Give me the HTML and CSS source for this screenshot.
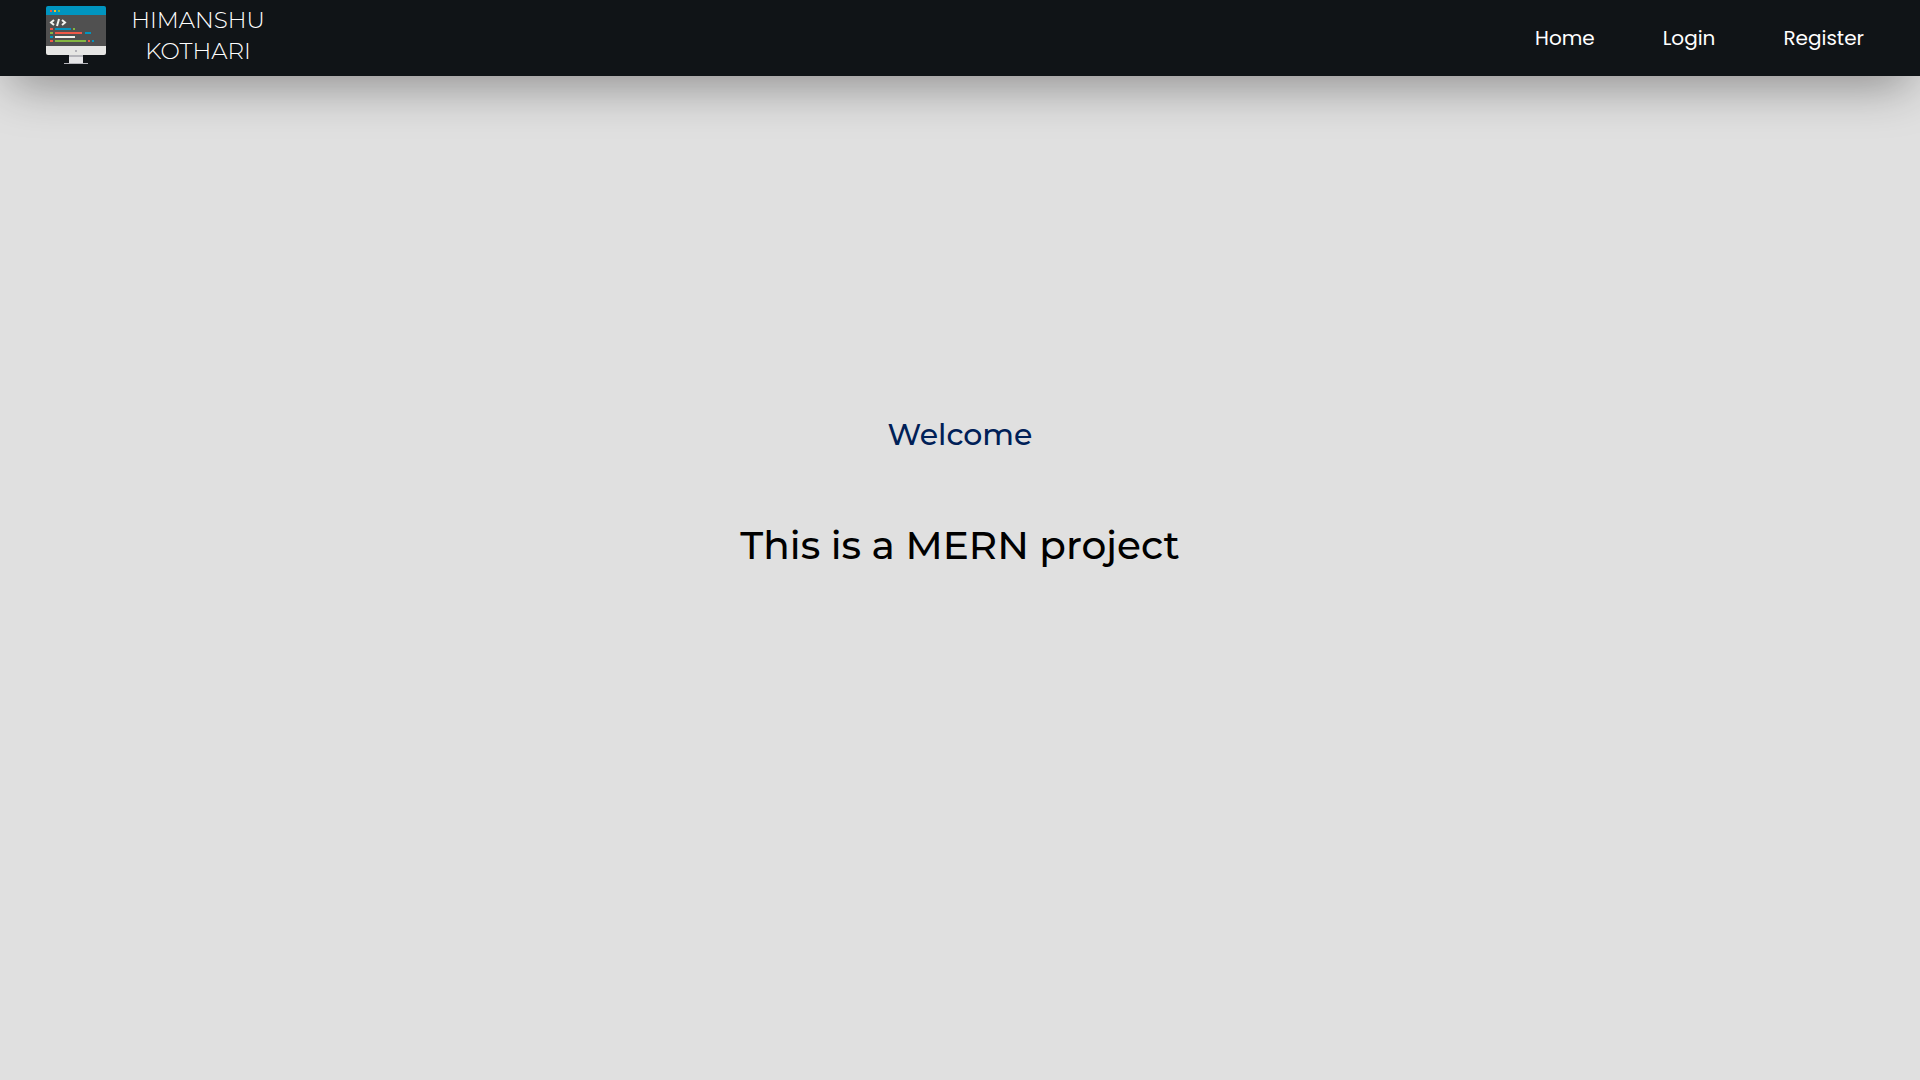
FILE: index.html
```html
<!DOCTYPE html>
<html lang="en">
<head>
  <meta charset="utf-8">
  <meta name="viewport" content="width=device-width, initial-scale=1">
  <title>Himanshu Kothari</title>
  <link rel="stylesheet" href="styles.css">
</head>
<body>
  <header class="navbar">
    <div class="brand">
      <svg class="brand-logo" viewBox="0 0 60 60" aria-hidden="true">
        <path fill="#505050" d="M0 8h60v33H0z"/>
        <path fill="#0095c0" d="M2 0h56q2 0 2 2v7H0V2q0-2 2-2z"/>
        <path fill="#e6e6e4" d="M0 40h60v7q0 2-2 2H2q-2 0-2-2z"/>
        <path fill="#e4e4e6" d="M23 49h14v8H23z"/>
        <path fill="#b4b4ba" d="M23 49h14v2H23zM18 57h24v1H18zM29 44h2v2h-2z"/>
        <path fill="#ef5848" d="M4 4h2v2H4zM4 22h3v2H4zM4 34h3v2H4zM9 26h27v2H9zM42 34h2v2h-2z"/>
        <path fill="#f3bd20" d="M8 4h2v2H8z"/>
        <path fill="#84b641" d="M12 4h2v2h-2zM27 22h2v2h-2zM4 26h3v2H4zM9 34h31v2H9z"/>
        <path fill="#0095c0" d="M9 22h16v2H9zM39 26h6v2h-6zM4 30h3v2H4zM46 34h2v2h-2z"/>
        <path fill="#f2f2ee" d="M9 30h20v2H9z"/>
        <path fill="none" stroke="#f2f2ee" stroke-width="2" d="M8 14l-3 2.500 3 2.500M13 13l-2 7M16 14l3 2.500-3 2.500"/>
      </svg>
      <span class="brand-name">HIMANSHU KOTHARI</span>
    </div>
    <nav class="nav-links">
      <a href="#home">Home</a>
      <a href="#login">Login</a>
      <a href="#register">Register</a>
    </nav>
  </header>
  <main class="hero">
    <p class="hero-greeting">Welcome</p>
    <h1 class="hero-title">This is a MERN project</h1>
  </main>
</body>
</html>
```
FILE: styles.css
```css
* {
  box-sizing: border-box;
}

body {
  display: flex;
  flex-direction: column;
  min-height: 100vh;
  margin: 0;
  background: #e0e0e0;
  font-family: Montserrat, Inter, sans-serif;
}

.navbar {
  display: flex;
  align-items: center;
  justify-content: space-between;
  min-height: 76px;
  padding: 0 56px 0 46px;
  background: #101417;
  color: #fff;
  box-shadow: 0 18px 50px -10px rgba(4, 0, 0, 0.4);
}

.brand {
  display: flex;
  align-items: center;
  gap: 24px;
  padding-bottom: 4px;
}

.brand-logo {
  width: 60px;
  height: 60px;
}

.brand-name {
  width: 136px;
  font-size: 23px;
  font-weight: 300;
  line-height: 31px;
  text-align: center;
}

.nav-links {
  display: flex;
  gap: 68px;
}

.nav-links a {
  color: #fff;
  font-family: Poppins, Inter, sans-serif;
  font-size: 20px;
  line-height: 30px;
  text-decoration: none;
}

.hero {
  display: flex;
  flex: 1;
  flex-direction: column;
  align-items: center;
  justify-content: center;
  gap: 64px;
  padding-bottom: 170px;
  text-align: center;
}

.hero-greeting {
  margin: 0;
  color: #002057;
  font-size: 30px;
  font-weight: 500;
  line-height: 40px;
}

.hero-title {
  margin: 0;
  color: #000;
  font-size: 39px;
  font-weight: 500;
  line-height: 52px;
}
```
